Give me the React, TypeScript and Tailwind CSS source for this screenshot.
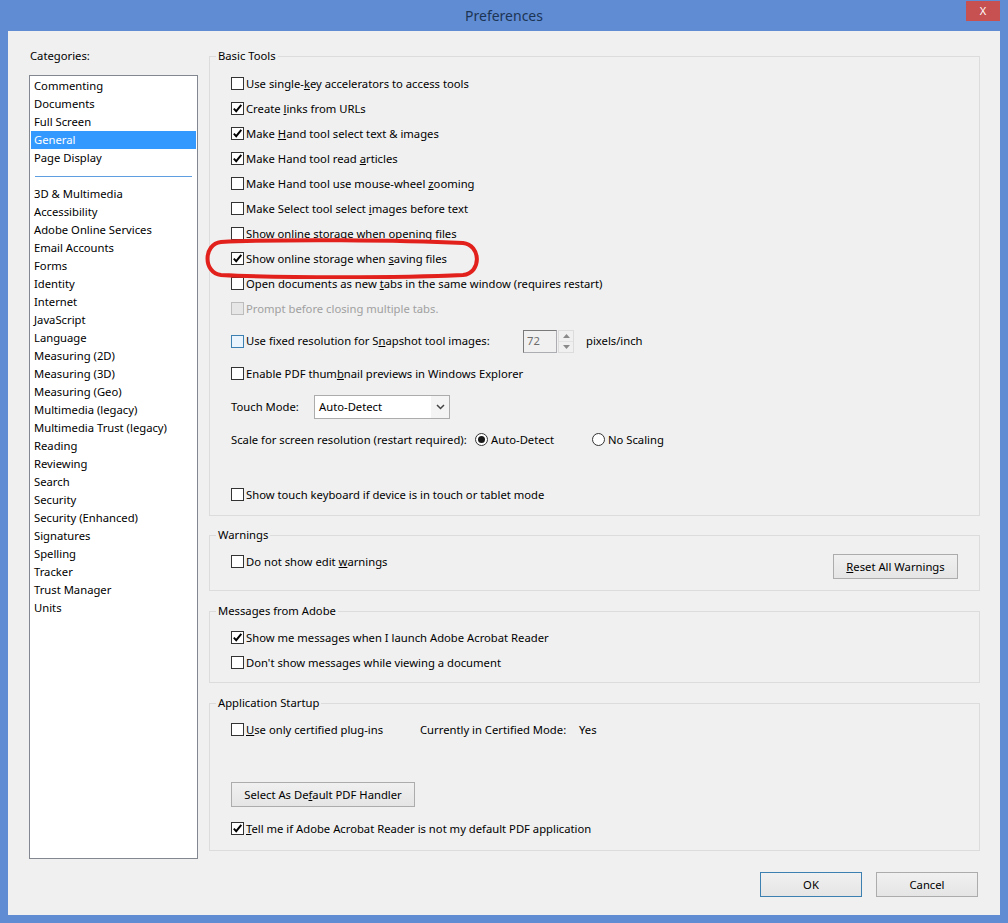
import type { ReactNode } from 'react';

const categoriesTop = ['Commenting', 'Documents', 'Full Screen', 'General', 'Page Display'];
const categoriesRest = [
  '3D & Multimedia',
  'Accessibility',
  'Adobe Online Services',
  'Email Accounts',
  'Forms',
  'Identity',
  'Internet',
  'JavaScript',
  'Language',
  'Measuring (2D)',
  'Measuring (3D)',
  'Measuring (Geo)',
  'Multimedia (legacy)',
  'Multimedia Trust (legacy)',
  'Reading',
  'Reviewing',
  'Search',
  'Security',
  'Security (Enhanced)',
  'Signatures',
  'Spelling',
  'Tracker',
  'Trust Manager',
  'Units',
];

function Box({ checked, disabled, hover }: { checked?: boolean; disabled?: boolean; hover?: boolean }) {
  let cls = 'border-[#333333] bg-white';
  if (disabled) cls = 'border-[#bcbcbc] bg-[#e6e6e6]';
  if (hover) cls = 'border-[#3c7fb1] bg-[#eaf4fd]';
  return (
    <span className={`flex h-[13px] w-[13px] shrink-0 items-center justify-center border ${cls}`}>
      {checked && (
        <svg width="11" height="11" viewBox="0 0 11 11">
          <path d="M1.8 5.6 L4.2 8.2 L9.3 1.9" fill="none" stroke="#000" strokeWidth="1.9" />
        </svg>
      )}
    </span>
  );
}

function Row({
  checked,
  disabled,
  hover,
  children,
  className = '',
}: {
  checked?: boolean;
  disabled?: boolean;
  hover?: boolean;
  children: ReactNode;
  className?: string;
}) {
  return (
    <div className={`flex h-[25px] items-center gap-[2px] whitespace-nowrap ${className}`}>
      <Box checked={checked} disabled={disabled} hover={hover} />
      <span className={disabled ? 'text-[#a0a0a0]' : 'text-black'}>{children}</span>
    </div>
  );
}

function Radio({ on, children }: { on?: boolean; children: ReactNode }) {
  return (
    <div className="flex items-center gap-[3px] whitespace-nowrap">
      <span className="flex h-[13px] w-[13px] items-center justify-center rounded-full border border-[#333333] bg-white">
        {on && <span className="h-[7px] w-[7px] rounded-full bg-[#1a1a1a]" />}
      </span>
      <span>{children}</span>
    </div>
  );
}

function Btn({ children, className = '', focus }: { children: ReactNode; className?: string; focus?: boolean }) {
  return (
    <div
      className={`flex h-[25px] items-center justify-center border bg-gradient-to-b from-[#f0f0f0] to-[#e5e5e5] whitespace-nowrap ${
        focus ? 'border-[#3c7fb1]' : 'border-[#acacac]'
      } ${className}`}
    >
      {children}
    </div>
  );
}

function Group({ title, className = '', children }: { title: string; className?: string; children: ReactNode }) {
  return (
    <fieldset className={`border border-[#dcdcdc] pl-[21px] ${className}`}>
      <legend className="-ml-[15px] h-[16px] px-[2px] leading-[16px]">{title}</legend>
      {children}
    </fieldset>
  );
}

export default function App() {
  return (
    <div className="flex h-[923px] w-[1008px] flex-col bg-[#608cd4] font-['Noto_Sans',sans-serif] text-[11.25px] leading-[16px] text-black">
      <div className="relative flex h-[31px] shrink-0 items-center justify-center">
        <span className="text-[14px] text-[#1c3554]">Preferences</span>
        <div className="absolute right-[8px] top-[1px] flex h-[20px] w-[34px] items-center justify-center bg-[#c75050] text-[11px] text-white">
          X
        </div>
      </div>

      <div className="mx-[8px] mb-[8px] flex flex-1 bg-[#f0f0f0] pl-[21px] pt-[17px]">
        <div className="flex w-[169px] shrink-0 flex-col">
          <div className="h-[16px] pl-[1px]">Categories:</div>
          <div className="mt-[11px] h-[784px] border border-[#828790] bg-white px-[1px] pt-[1px]">
            {categoriesTop.map((c) => (
              <div
                key={c}
                className={`flex h-[18px] items-center pl-[3px] ${c === 'General' ? 'bg-[#3399ff] text-white' : ''}`}
              >
                {c}
              </div>
            ))}
            <div className="flex h-[18px] items-center px-[4px]">
              <div className="h-px w-full bg-[#5f9ee0]" />
            </div>
            {categoriesRest.map((c) => (
              <div key={c} className="flex h-[18px] items-center pl-[3px]">
                {c}
              </div>
            ))}
          </div>
        </div>

        <div className="ml-[11px] flex w-[771px] flex-col">
          <Group title="Basic Tools" className="h-[468px] pt-[7px]">
            <Row>
              Use single-<u>k</u>ey accelerators to access tools
            </Row>
            <Row checked>
              Create <u>l</u>inks from URLs
            </Row>
            <Row checked>
              Make <u>H</u>and tool select text &amp; images
            </Row>
            <Row checked>
              Make Hand tool read <u>a</u>rticles
            </Row>
            <Row>
              Make Hand tool use mouse-wheel <u>z</u>ooming
            </Row>
            <Row>
              Make Select tool select <u>i</u>mages before text
            </Row>
            <Row>
              Show online storage when o<u>p</u>ening files
            </Row>
            <Row checked>
              Show online storage when <u>s</u>aving files
            </Row>
            <Row>
              Open documents as new <u>t</u>abs in the same window (requires restart)
            </Row>
            <Row disabled>Prompt before closing multiple tabs.</Row>

            <div className="mt-[8px] flex h-[24px] items-center">
              <Row hover className="w-[292px]">
                Use fixed resolution for S<u>n</u>apshot tool images:
              </Row>
              <div className="flex h-[23px] w-[34px] items-center border border-[#abadb3] border-l-[#7a7a7a] border-t-[#7a7a7a] bg-[#f0f0f0] pl-[3px] text-[#6d6d6d]">
                72
              </div>
              <div className="ml-[1px] flex h-[23px] w-[16px] flex-col border border-[#dcdcdc]">
                <div className="flex flex-1 items-center justify-center">
                  <svg width="7" height="4" viewBox="0 0 7 4">
                    <path d="M0 4 L3.5 0 L7 4 Z" fill="#8a8a8a" />
                  </svg>
                </div>
                <div className="h-px bg-[#e3e3e3]" />
                <div className="flex flex-1 items-center justify-center">
                  <svg width="7" height="4" viewBox="0 0 7 4">
                    <path d="M0 0 L3.5 4 L7 0 Z" fill="#8a8a8a" />
                  </svg>
                </div>
              </div>
              <span className="ml-[12px]">pixels/inch</span>
            </div>

            <Row className="mt-[8px]">
              Enable PDF thum<u>b</u>nail previews in Windows Explorer
            </Row>

            <div className="mt-[9px] flex h-[24px] items-center">
              <span className="w-[83px]">Touch Mode:</span>
              <div className="flex h-[24px] w-[136px] items-stretch border border-[#acacac] bg-white">
                <div className="flex flex-1 items-center pl-[4px]">Auto-Detect</div>
                <div className="flex w-[18px] items-center justify-center bg-[#f4f4f4]">
                  <svg width="9" height="6" viewBox="0 0 9 6">
                    <path d="M1 1 L4.5 4.5 L8 1" fill="none" stroke="#444" strokeWidth="1.5" />
                  </svg>
                </div>
              </div>
            </div>

            <div className="mt-[8px] flex h-[25px] items-center whitespace-nowrap">
              <span className="w-[244px]">Scale for screen resolution (restart required):</span>
              <div className="w-[117px]">
                <Radio on>Auto-Detect</Radio>
              </div>
              <Radio>No Scaling</Radio>
            </div>

            <Row className="mt-[30px]">Show touch keyboard if device is in touch or tablet mode</Row>
          </Group>

          <Group title="Warnings" className="mt-[11px] h-[64px] pt-[6px]">
            <div className="flex items-start justify-between pr-[21px]">
              <Row>
                Do not show edit <u>w</u>arnings
              </Row>
              <Btn className="mt-[5px] w-[125px]">
                <span>
                  <u>R</u>eset All Warnings
                </span>
              </Btn>
            </div>
          </Group>

          <Group title="Messages from Adobe" className="mt-[12px] h-[80px] pt-[6px]">
            <Row checked>Show me messages when I launch Adobe Acrobat Reader</Row>
            <Row>Don't show messages while viewing a document</Row>
          </Group>

          <Group title="Application Startup" className="mt-[12px] h-[156px] pt-[6px]">
            <div className="flex h-[25px] items-center whitespace-nowrap">
              <Row className="w-[189px]">
                <u>U</u>se only certified plug-ins
              </Row>
              <span className="w-[159px]">Currently in Certified Mode:</span>
              <span>Yes</span>
            </div>
            <Btn className="mt-[40px] w-[184px]">
              <span>
                Select As De<u>f</u>ault PDF Handler
              </span>
            </Btn>
            <Row checked className="mt-[9px]">
              <u>T</u>ell me if Adobe Acrobat Reader is not my default PDF application
            </Row>
          </Group>

          <div className="mr-[2px] mt-[21px] flex justify-end gap-[14px]">
            <Btn focus className="w-[102px]">
              OK
            </Btn>
            <Btn className="w-[102px]">Cancel</Btn>
          </div>
        </div>
      </div>

      <svg className="pointer-events-none absolute left-[201px] top-[238px]" width="282" height="41" viewBox="0 0 282 41">
        <path
          d="M20 4 C80 1 200 2 262 5 C280 7 281 35 262 37 C200 40 80 40 20 37 C2 35 2 6 20 4 Z"
          fill="none"
          stroke="#e2211c"
          strokeWidth="4"
        />
      </svg>
    </div>
  );
}
